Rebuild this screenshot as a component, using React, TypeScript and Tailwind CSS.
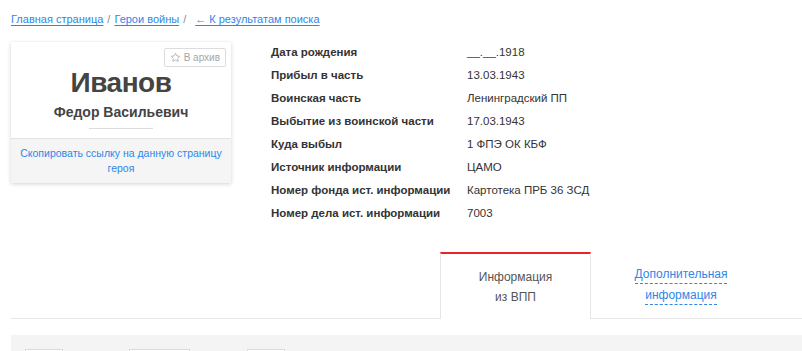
import React from "react";

const rows: [string, string][] = [
  ["Дата рождения", "__.__.1918"],
  ["Прибыл в часть", "13.03.1943"],
  ["Воинская часть", "Ленинградский ПП"],
  ["Выбытие из воинской части", "17.03.1943"],
  ["Куда выбыл", "1 ФПЭ ОК КБФ"],
  ["Источник информации", "ЦАМО"],
  ["Номер фонда ист. информации", "Картотека ПРБ 36 ЗСД"],
  ["Номер дела ист. информации", "7003"],
];

function StarIcon() {
  return (
    <svg width="11" height="11" viewBox="0 0 24 24" fill="none" stroke="#b5b5b5" strokeWidth="2" strokeLinejoin="round">
      <path d="M12 2.5l2.9 6.1 6.6.8-4.9 4.6 1.3 6.6L12 17.3l-5.9 3.3 1.3-6.6-4.9-4.6 6.6-.8z" />
    </svg>
  );
}

export default function App() {
  return (
    <div className="min-h-screen bg-white text-[#444] font-['Liberation_Sans',Arial,sans-serif]">
      {/* breadcrumbs */}
      <div className="pl-[11px] pt-[12px] text-[11px] leading-[14px] text-[#8a8a8a] flex items-center">
        <a className="text-[#2f86e8] underline underline-offset-2">Главная страница</a>
        <span className="mx-[4px]">/</span>
        <a className="text-[#2f86e8] underline underline-offset-2">Герои войны</a>
        <span className="ml-[4px] mr-[9px]">/</span>
        <a className="text-[#2f86e8] underline underline-offset-2">← К результатам поиска</a>
      </div>

      <div className="flex mt-[16px] pl-[11px]">
        {/* hero card */}
        <div className="w-[220px] h-[141px] bg-white shadow-[0_1px_4px_rgba(0,0,0,0.18)] flex flex-col">
          <div className="relative flex-1 flex flex-col items-center pt-[26px]">
            <div className="absolute right-[5px] top-[6px] h-[19px] px-[5px] border border-[#dcdcdc] rounded-[2px] flex items-center gap-[3px] text-[10px] text-[#a5a5a5]">
              <StarIcon />
              <span>В архив</span>
            </div>
            <div className="text-[28px] leading-[30px] font-bold text-[#444] tracking-[-0.5px]">Иванов</div>
            <div className="mt-[5px] text-[14px] leading-[18px] font-bold text-[#444]">Федор Васильевич</div>
            <div className="mt-[7px] w-[64px] h-px bg-[#dcdcdc]" />
          </div>
          <div className="h-[45px] bg-[#f5f5f5] border-t border-[#e3e3e3] flex items-center justify-center text-center text-[10.5px] leading-[15px] text-[#2f86e8] whitespace-nowrap">
            <span>
              Скопировать ссылку на данную страницу
              <br />
              героя
            </span>
          </div>
        </div>

        {/* info table */}
        <div className="ml-[40px] -mt-px text-[11.5px] leading-[23px] text-[#333]">
          {rows.map(([k, v]) => (
            <div key={k} className="flex">
              <div className="w-[196px] font-bold">{k}</div>
              <div>{v}</div>
            </div>
          ))}
        </div>
      </div>

      {/* tabs */}
      <div className="mt-[27px] ml-[11px] flex border-b border-[#e6e6e6] h-[67px]">
        <div className="w-[429px]" />
        <div className="w-[151px] h-[67px] -mb-px bg-white border-t-2 border-t-[#e8232b] border-x border-x-[#e6e6e6] flex items-center justify-center text-center text-[12px] leading-[20px] text-[#555]">
          Информация
          <br />
          из ВПП
        </div>
        <div className="w-[180px] flex flex-col items-center justify-center text-[12px] leading-[20px] text-[#2f86e8]">
          <span className="border-b border-dashed border-[#2f86e8] leading-[17px]">Дополнительная</span>
          <span className="mt-[3px] border-b border-dashed border-[#2f86e8] leading-[17px]">информация</span>
        </div>
      </div>

      {/* filter panel */}
      <div className="mt-[16px] ml-[11px] h-[40px] bg-[#f4f4f4] pt-[14px] flex">
        <div className="ml-[14px] w-[38px] h-[26px] bg-white border border-[#dcdcdc]" />
        <div className="ml-[66px] w-[61px] h-[26px] bg-white border border-[#dcdcdc]" />
        <div className="ml-[57px] w-[38px] h-[26px] bg-white border border-[#dcdcdc]" />
      </div>
    </div>
  );
}
